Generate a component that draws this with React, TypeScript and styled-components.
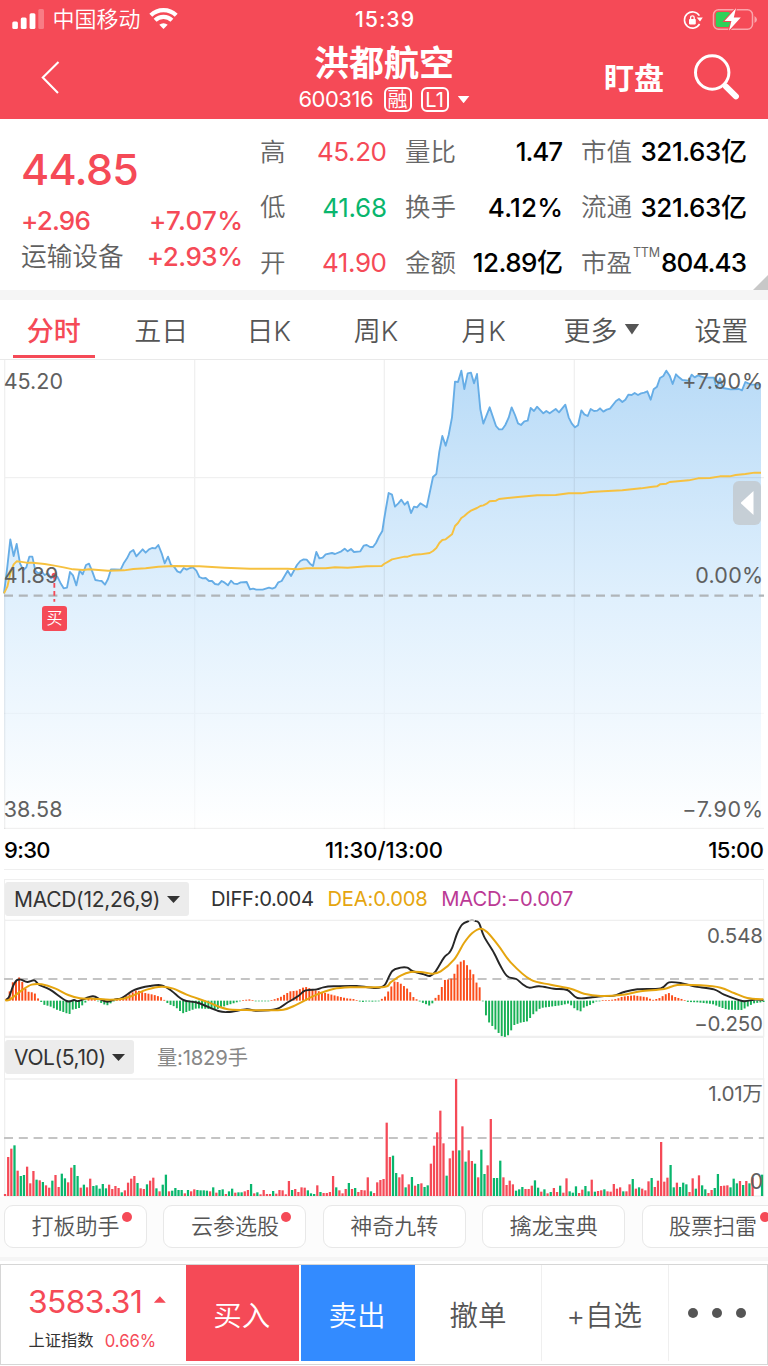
import React from 'react';
import styled, { createGlobalStyle } from 'styled-components';

const RED = '#f54a57';
const GREEN = '#09b66d';
const LINE = '#efefef';

const Global = createGlobalStyle`
  * { box-sizing: border-box; }
  html, body { margin: 0; padding: 0; background: #fff; }
  body {
    width: 768px;
    height: 1366px;
    overflow: hidden;
    font-family: Inter, "Noto Sans CJK SC", sans-serif;
    font-weight: 350;
    color: #555;
    white-space: nowrap;
  }
  svg { display: block; }
`;

const Screen = styled.main`
  width: 768px;
  height: 1366px;
  display: flex;
  flex-direction: column;
  overflow: hidden;
  background: #fff;
`;

const T = styled.span<{ size: number; color?: string; weight?: number; gap?: number }>`
  font-size: ${(p) => p.size}px;
  line-height: 1.2;
  color: ${(p) => p.color ?? 'inherit'};
  font-weight: ${(p) => p.weight ?? 400};
  letter-spacing: ${(p) => p.gap ?? 0}px;
  margin-right: ${(p) => -(p.gap ?? 0)}px;
`;

/* ---------- header ---------- */
const Header = styled.header`
  height: 119px;
  flex: none;
  background: ${RED};
  color: #fff;
`;
const StatusBar = styled.div`
  height: 39px;
  display: grid;
  grid-template-columns: 1fr auto 1fr;
  align-items: center;
  padding: 0 11px 0 12px;
`;
const StatusSide = styled.div<{ end?: boolean }>`
  display: flex;
  align-items: center;
  gap: ${(p) => (p.end ? 9 : 8.5)}px;
  justify-content: ${(p) => (p.end ? 'flex-end' : 'flex-start')};
`;
const TitleBar = styled.div`
  height: 80px;
  display: grid;
  grid-template-columns: 1fr auto 1fr;
  align-items: start;
`;
const BackButton = styled.div`
  padding: 22px 0 0 40.5px;
`;
const TitleBlock = styled.div`
  display: flex;
  flex-direction: column;
  align-items: center;
`;
const StockName = styled.h1`
  margin: 0;
  height: 45px;
  font-size: 35px;
  line-height: 49px;
  font-weight: 700;
`;
const CodeRow = styled.div`
  display: flex;
  align-items: center;
  height: 31px;
`;
const Badge = styled.span<{ left?: number }>`
  width: 28px;
  height: 25px;
  margin-left: ${(p) => p.left ?? 9}px;
  border: 2px solid #fff;
  border-radius: 6px;
  display: flex;
  align-items: center;
  justify-content: center;
  font-size: 20px;
  line-height: 20px;
  font-weight: 400;
`;
const Triangle = styled.i<{ w: number; h: number; up?: boolean; left?: number }>`
  width: ${(p) => p.w}px;
  height: ${(p) => p.h}px;
  margin-left: ${(p) => p.left ?? 0}px;
  margin-bottom: ${(p) => (p.up ? 5 : 0)}px;
  flex: none;
  background: currentColor;
  clip-path: ${(p) => (p.up ? 'polygon(50% 0, 100% 100%, 0 100%)' : 'polygon(0 0, 100% 0, 50% 100%)')};
`;
const HeaderActions = styled.div`
  display: flex;
  justify-content: flex-end;
  align-items: center;
  gap: 30px;
  height: 78px;
  padding-right: 26px;
`;

/* ---------- quote ---------- */
const Quote = styled.section`
  height: 171px;
  flex: none;
  position: relative;
  display: flex;
  padding: 5px 21px 0 21px;
`;
const Summary = styled.div`
  width: 222px;
  padding-top: 17px;
`;
const Price = styled.div`
  height: 62px;
  padding-bottom: 5px;
  display: flex;
  align-items: center;
`;
const SummaryRow = styled.div`
  height: 36px;
  display: flex;
  justify-content: space-between;
  align-items: center;
`;
const Stats = styled.div`
  margin-left: 17px;
  display: grid;
  grid-template-columns: 127px 158px 166px;
  column-gap: 18px;
  grid-auto-rows: 55.6px;
`;
const Stat = styled.div`
  display: flex;
  align-items: center;
  justify-content: space-between;
`;
const Sup = styled.sup`
  font-size: 12.6px;
  line-height: 17px;
  font-weight: 400;
  color: #666;
  letter-spacing: -0.3px;
  align-self: flex-start;
  margin: 9px auto 0 1px;
`;
const Corner = styled.i`
  position: absolute;
  right: 0;
  bottom: 0;
  width: 15px;
  height: 15px;
  background: #c8c8c8;
  clip-path: polygon(100% 0, 100% 100%, 0 100%);
`;
const Divider = styled.div<{ h: number }>`
  height: ${(p) => p.h}px;
  flex: none;
  background: #f5f5f5;
`;

/* ---------- tabs ---------- */
const Tabs = styled.nav`
  height: 60px;
  flex: none;
  display: grid;
  grid-template-columns: 107.6px repeat(4, 107.4px) 128.6px 1fr;
  border-bottom: 1px solid #e9e9e9;
`;
const Tab = styled.div<{ active?: boolean; last?: boolean }>`
  display: flex;
  align-items: center;
  justify-content: center;
  padding-bottom: ${(p) => (p.active ? 0 : 1)}px;
  padding-left: ${(p) => (p.last ? 9 : 0)}px;
  position: relative;
  color: ${(p) => (p.active ? RED : '#555')};
  font-size: 27px;
  font-weight: ${(p) => (p.active ? 500 : 350)};
  &::after {
    content: '';
    display: ${(p) => (p.active ? 'block' : 'none')};
    position: absolute;
    left: 13px;
    right: 12.6px;
    bottom: 1px;
    height: 3.5px;
    background: ${RED};
  }
`;

/* ---------- charts ---------- */
const PriceChart = styled.section`
  height: 469px;
  flex: none;
  position: relative;
`;
const Pinned = styled.span<{ top: number; right?: boolean; size?: number; gap?: number }>`
  position: absolute;
  top: ${(p) => p.top}px;
  ${(p) => (p.right ? `right: ${5 - (p.gap ?? 0)}px;` : 'left: 3.7px;')}
  font-size: ${(p) => p.size ?? 21.5}px;
  line-height: 26px;
  font-weight: 400;
  letter-spacing: ${(p) => p.gap ?? 0}px;
  color: #606060;
`;
const BuyMark = styled.span`
  position: absolute;
  left: 42px;
  top: 246px;
  width: 25px;
  height: 25px;
  border-radius: 3px;
  background: ${RED};
  color: #fff;
  font-size: 16px;
  line-height: 24px;
  text-align: center;
`;
const Drawer = styled.span`
  position: absolute;
  left: 733px;
  top: 121px;
  width: 28px;
  height: 44px;
  border-radius: 6px;
  background: rgba(190, 190, 190, 0.6);
  display: flex;
  align-items: center;
  justify-content: center;
  &::before {
    content: '';
    width: 13px;
    height: 24px;
    background: #fff;
    clip-path: polygon(100% 0, 100% 100%, 0 50%);
  }
`;
const TimeAxis = styled.div`
  height: 41px;
  flex: none;
  margin: 0 4px;
  padding-top: 1.5px;
  display: grid;
  grid-template-columns: 1fr auto 1fr;
  align-items: center;
  border-bottom: 1px solid ${LINE};
  & > :last-child { justify-self: end; }
`;
const Indicator = styled.section<{ h: number }>`
  height: ${(p) => p.h}px;
  flex: none;
  position: relative;
`;
const MacdPanel = styled(Indicator)`
  margin-top: 9px;
`;
const IndicatorHead = styled.div<{ h: number; pad: number }>`
  height: ${(p) => p.h}px;
  margin: 0 4px;
  padding-top: ${(p) => p.pad}px;
  display: flex;
  align-items: flex-start;
  border: 1px solid ${LINE};
  border-bottom: 0;
`;
const Picker = styled.div<{ w: number }>`
  width: ${(p) => p.w}px;
  height: 34px;
  flex: none;
  padding: 1px 9px 0 9px;
  border-radius: 3px;
  background: #ececec;
  color: #333;
  display: flex;
  justify-content: space-between;
  align-items: center;
`;
const Readings = styled.div<{ left: number; drop?: number }>`
  height: 34px;
  padding-top: ${(p) => p.drop ?? 1}px;
  margin-left: ${(p) => p.left}px;
  display: flex;
  align-items: center;
  gap: 13.5px;
`;

/* ---------- chips and trade bar ---------- */
const Chips = styled.div`
  height: 60px;
  flex: none;
  background: #fcfcfc;
  display: flex;
  gap: 16.4px;
  padding: 8.4px 0 0 4px;
`;
const Chip = styled.div<{ dot?: boolean }>`
  width: 143px;
  height: 43px;
  flex: none;
  position: relative;
  background: #fff;
  border: 1px solid #e8e8e8;
  border-radius: 9px;
  font-size: 22px;
  line-height: 41px;
  text-align: center;
  &::after {
    content: '';
    display: ${(p) => (p.dot ? 'block' : 'none')};
    position: absolute;
    left: 117px;
    top: 6px;
    width: 10px;
    height: 10px;
    border-radius: 50%;
    background: ${RED};
  }
`;
const TradeBar = styled.footer`
  height: 101px;
  flex: none;
  margin-top: 3px;
  display: flex;
  border: 1px solid #d6d6d6;
`;
const IndexCell = styled.div`
  width: 184.5px;
  padding-left: 27px;
  color: ${RED};
`;
const IndexRow = styled.div<{ h: number; top: number; gap: number; left?: number }>`
  height: ${(p) => p.h}px;
  margin-top: ${(p) => p.top}px;
  margin-left: ${(p) => p.left ?? 0}px;
  display: flex;
  align-items: center;
  gap: ${(p) => p.gap}px;
`;
const TradeCell = styled.div<{ w: number; bg?: string; rule?: boolean }>`
  width: ${(p) => p.w}px;
  height: 96px;
  flex: none;
  display: flex;
  align-items: center;
  justify-content: center;
  gap: 14.3px;
  padding: 0 1px 0 0;
  background: ${(p) => p.bg ?? '#fff'};
  color: ${(p) => (p.bg ? '#fff' : '#555')};
  margin-right: ${(p) => (p.bg ? 1.5 : 0)}px;
  border-right: ${(p) => (p.rule ? `1px solid ${LINE}` : '0')};
  font-size: 28.5px;
`;
const Dot = styled.i`
  width: 10px;
  height: 10px;
  border-radius: 50%;
  background: #555;
`;

/* ---------- data: three units to a pixel ---------- */
const priceLine =
  '12,700 22,620 31,538 41,588 50,552 60,610 70,630 79,622 88,590 97,590 106,632 115,640 125,635 134,645 144,640 153,655 163,648 172,650 181,668 191,685 201,683 210,636 219,646 229,676 239,632 248,643 258,615 267,611 277,635 286,660 296,662 305,663 315,674 324,657 333,628 343,628 362,629 372,608 381,595 390,577 400,570 409,589 419,578 428,568 437,578 447,568 456,564 466,565 475,555 485,580 494,610 504,590 513,615 522,620 532,634 541,638 551,624 560,629 570,624 579,622 589,632 598,651 608,655 617,654 627,663 636,663 645,672 655,674 665,663 674,668 684,676 693,662 702,671 712,672 722,667 740,666 750,688 759,686 769,689 788,689 807,683 817,686 826,682 835,667 845,663 863,632 873,648 891,615 901,603 911,598 920,599 930,611 939,618 949,576 958,595 968,593 977,583 996,579 1005,582 1024,574 1034,566 1043,574 1053,567 1062,576 1081,574 1091,557 1100,555 1110,561 1119,561 1128,549 1138,528 1147,513 1152,480 1157,450 1166,399 1176,404 1185,440 1195,430 1204,419 1214,434 1223,425 1233,459 1242,440 1251,442 1261,430 1280,442 1299,351 1309,342 1318,275 1327,228 1337,257 1346,225 1356,172 1365,65 1374,66 1384,32 1393,87 1403,40 1413,38 1422,70 1431,42 1441,148 1450,191 1469,142 1488,198 1497,208 1507,208 1516,195 1526,173 1535,142 1545,165 1554,190 1563,195 1573,184 1583,182 1592,144 1602,153 1611,140 1630,160 1639,153 1649,160 1667,147 1677,157 1696,134 1706,172 1715,190 1725,202 1734,196 1744,151 1753,163 1763,168 1772,147 1782,153 1792,152 1800,145 1810,155 1820,149 1830,146 1848,123 1857,117 1867,126 1876,119 1885,104 1895,105 1904,99 1914,105 1923,100 1933,98 1942,94 1952,119 1961,88 1971,80 1980,54 1990,48 1999,32 2009,47 2018,72 2028,43 2037,52 2047,60 2066,62 2075,44 2084,52 2094,46 2112,53 2142,53 2150,84 2160,55 2169,84 2192,88 2217,87 2226,91 2236,66 2245,70 2255,74 2283,74';
const averageLine =
  '12,700 22,680 31,640 41,613 50,604 60,605 79,608 97,608 134,612 163,617 191,622 219,628 250,630 267,628 324,632 372,631 400,627 437,625 475,620 522,618 598,619 674,623 750,626 863,626 893,628 920,625 977,625 1005,622 1043,623 1072,621 1100,619 1145,618 1152,612 1166,604 1176,598 1214,590 1223,590 1242,584 1261,583 1289,579 1299,573 1309,564 1318,549 1327,540 1337,538 1356,523 1365,498 1374,489 1384,474 1393,468 1403,459 1413,452 1431,444 1441,438 1450,436 1460,431 1469,424 1488,422 1497,417 1554,411 1611,406 1667,405 1706,400 1744,400 1772,396 1810,394 1867,391 1923,385 1952,381 1971,379 1980,373 1999,371 2009,366 2066,361 2094,355 2130,354 2160,349 2189,349 2207,345 2236,342 2264,338 2283,338';
const diffRise =
  '18,661 28,650 38,622 50,602 62,600 82,607 103,602 118,616 150,630 200,664 222,661 235,664 278,650 300,659 322,666 345,659 365,655 405,630 450,619 485,617 515,634 550,661 595,670 655,694 685,697 740,689 770,693 830,688 860,670 895,649 915,633 950,629 970,623 1000,620 1070,619 1125,625 1147,621 1157,612 1177,574 1202,564 1222,564 1237,574 1272,584 1290,589 1307,575 1332,534 1347,520 1357,503 1372,460 1387,434 1407,424';
const diffFall =
  '1424,424 1437,430 1452,470 1482,520 1502,560 1522,590 1549,598 1567,613 1587,624 1617,620 1662,627 1702,631 1732,655 1777,653 1812,649 1842,648 1872,637 1912,629 1982,626 2007,608 2047,611 2082,620 2142,629 2172,645 2227,664 2262,660 2290,661';

const toPoints = (s: string) => s.split(' ').map((p) => p.split(',').map(Number) as [number, number]);

const deaPoints: [number, number][] = [
  [15, 662], [30, 659], [65, 632], [95, 615], [125, 614], [165, 626], [205, 646], [240, 656], [280, 657], [330, 660],
  [370, 657], [400, 647], [440, 630], [485, 621], [520, 627], [560, 645], [620, 666], [680, 688], [740, 691],
  [790, 692], [850, 690], [890, 675], [950, 645], [1000, 628], [1050, 623], [1152, 622], [1172, 608], [1202, 588],
  [1232, 577], [1262, 577], [1297, 582], [1322, 575], [1362, 540], [1392, 490], [1417, 460], [1442, 447], [1462, 458],
  [1497, 500], [1532, 548], [1592, 600], [1652, 615], [1712, 627], [1752, 642], [1802, 649], [1862, 646], [1922, 635],
  [1992, 628], [2032, 616], [2102, 617], [2162, 624], [2202, 640], [2242, 655], [2290, 659],
];

const histogram: [number, number][] = [
  [19, 5], [28, 25], [38, 55], [47, 58], [57, 70], [66, 58], [75, 38], [84, 27], [103, 24], [113, 8], [120, 0],
  [131, -12], [150, -17], [170, -27], [190, -34], [208, -41], [217, -27], [236, -23], [255, -7], [265, 5], [285, 6],
  [300, -5], [320, -15], [340, -3], [350, 3], [370, 8], [390, 20], [410, 32], [430, 24], [460, 18], [485, 10],
  [495, 0], [505, -10], [525, -18], [548, -38], [570, -30], [590, -23], [610, -24], [650, -26], [680, -14],
  [710, -5], [730, 2], [750, 4], [765, -1], [790, -2], [808, -1], [820, 3], [840, 10], [870, 28], [890, 30],
  [915, 42], [950, 30], [980, 22], [1010, 14], [1040, 7], [1060, 5], [1075, -2], [1090, -4], [1100, -2],
  [1120, -3], [1140, -1], [1145, 5], [1156, 13], [1166, 30], [1185, 60], [1204, 50], [1223, 35], [1232, 24],
  [1242, 8], [1252, 3], [1260, -3], [1277, -10], [1287, -15], [1297, -8], [1306, 8], [1315, 15], [1325, 40],
  [1334, 62], [1353, 65], [1363, 80], [1372, 108], [1390, 124], [1400, 108], [1409, 95], [1419, 82], [1429, 55],
  [1439, 40], [1446, 0], [1449, -1], [1457, -42], [1467, -65], [1485, -85], [1504, -106], [1514, -109],
  [1524, -104], [1533, -90], [1543, -73], [1562, -66], [1582, -62], [1602, -38], [1622, -22], [1652, -18],
  [1682, -14], [1707, -8], [1722, -22], [1740, -34], [1752, -20], [1772, -12], [1787, -3], [1807, 1], [1832, 2],
  [1852, 6], [1867, 12], [1902, 16], [1942, 10], [1957, 2], [1977, 7], [2005, 24], [2022, 12], [2042, 6],
  [2057, 1], [2064, -4], [2092, -5], [2137, -10], [2162, -20], [2182, -27], [2227, -28], [2242, -18],
  [2262, -8], [2290, -4],
];

const volumes =
  'r6 r117 r142 g152 r76 g60 g63 r88 r38 r75 g49 r47 g42 r32 r25 g46 r63 r27 g67 g53 r41 r85 g93 g60 r25 g34 r26 r52 g30 g32 g22 g36 g23 r34 r21 r30 r24 g11 r17 r40 r52 r60 g39 r23 r21 g35 r46 r55 g23 r14 g34 g64 r14 g16 g24 g18 g18 r8 g18 r14 r20 g18 g17 g17 g16 r14 g26 r10 g18 g20 r6 g14 g22 r10 g11 g11 r14 r18 g36 r8 g11 r5 r18 r6 r6 g15 r7 r18 r17 r5 r45 g18 r21 r12 r26 r25 g17 g8 g6 r32 g12 r9 r9 r12 r60 g26 r17 r8 r21 g39 r21 g24 r12 r18 r17 r56 g14 r9 r41 r48 r51 r220 r117 g121 g69 r56 r65 g26 r35 g57 r31 g36 r38 g27 g32 r97 r151 r191 r256 r158 g61 r113 r136 r351 g137 r209 g103 r137 r105 g97 r56 g139 g66 r92 r231 g54 g54 g106 r56 r33 r46 r35 g16 g20 g27 r21 r21 r31 g47 g25 r13 g20 r8 g12 r24 r12 g31 r10 r53 g14 g10 g29 r9 r19 g30 g14 r49 g13 r15 r17 g20 r14 r13 r36 r22 r26 g14 r14 r35 g51 r22 g26 r22 r17 r44 g54 r27 r46 r162 r43 r55 g93 g26 r40 g27 g40 g35 r12 r53 g22 r62 g32 g20 r9 r18 g24 g66 r30 r31 r32 g26 g52 g38 r45 g33 r45 g38 r56 g0 g0 g64'.split(' ');

function valueAt(points: [number, number][], x: number) {
  for (let i = 1; i < points.length; i++) {
    const [x1, y1] = points[i];
    if (x <= x1) {
      const [x0, y0] = points[i - 1];
      return y0 + ((y1 - y0) * (x - x0)) / (x1 - x0);
    }
  }
  return points[points.length - 1][1];
}

function smoothPath(p: [number, number][]) {
  let d = `M${p[0]}`;
  for (let i = 0; i < p.length - 1; i++) {
    const a = p[Math.max(i - 1, 0)];
    const b = p[i];
    const c = p[i + 1];
    const e = p[Math.min(i + 2, p.length - 1)];
    d += ` C${b[0] + (c[0] - a[0]) / 6},${b[1] + (c[1] - a[1]) / 6} ${c[0] - (e[0] - b[0]) / 6},${c[1] - (e[1] - b[1]) / 6} ${c}`;
  }
  return d;
}

/* ---------- icons ---------- */
const SignalIcon = () => (
  <svg width="32" height="20" viewBox="0 0 32 20" fill="#fff">
    <rect x="0.3" y="12.5" width="5.6" height="7.5" rx="1.5" />
    <rect x="8.8" y="8.5" width="5.8" height="11.5" rx="1.5" />
    <rect x="17.6" y="4.2" width="5.8" height="15.8" rx="1.5" />
    <rect x="26.3" y="0" width="5.7" height="20" rx="1.5" opacity="0.28" />
  </svg>
);
const WifiIcon = () => (
  <svg width="29" height="22" viewBox="0 0 29 22" fill="none" stroke="#fff" strokeWidth="4.2">
    <path d="M1.8 7.3 A18.4 18.4 0 0 1 27.2 7.3" />
    <path d="M6.1 12.3 A12 12 0 0 1 22.9 12.3" />
    <path d="M14.5 21 L10.3 16.8 A6.2 6.2 0 0 1 18.7 16.8 Z" fill="#fff" stroke="none" />
  </svg>
);
const RotationLockIcon = () => (
  <svg width="20" height="20" viewBox="0 0 20 20" fill="none" stroke="#fff" strokeWidth="1.6">
    <path d="M16.4 5.6 A8.1 8.1 0 1 0 16.6 14" />
    <path d="M13.7 7.6 H19.8 L17 11.6 Z" fill="#fff" stroke="none" />
    <rect x="6" y="9" width="6.8" height="5.4" rx="0.8" fill="#fff" stroke="none" />
    <path d="M7.6 9.5 V7.6 a1.8 1.8 0 0 1 3.6 0 V9.5" strokeWidth="1.3" />
  </svg>
);
const BatteryIcon = () => (
  <svg width="45" height="23" viewBox="0 0 45 23">
    <rect x="1.5" y="1.7" width="39" height="19.6" rx="5" fill="none" stroke="#fff" strokeOpacity="0.5" strokeWidth="1.5" />
    <path d="M42.5 8 Q45 9.5 45 11.5 Q45 13.5 42.5 15 Z" fill="#fff" opacity="0.5" />
    <rect x="3.8" y="4" width="14.5" height="15" rx="2.5" fill="#2fd158" />
    <path d="M24 0.3 L12.6 13 H19.4 L17 22.6 L28.8 9.6 H21.8 Z" fill="#fff" stroke={RED} strokeWidth="2" paintOrder="stroke" />
  </svg>
);
const BackIcon = () => (
  <svg width="20" height="34" viewBox="0 0 20 34" fill="none" stroke="#fff" strokeWidth="2.1">
    <path d="M17.5 1 L1.8 16.5 L17 32" />
  </svg>
);
const SearchIcon = () => (
  <svg width="48" height="48" viewBox="0 0 48 48" fill="none" stroke="#fff">
    <circle cx="18.2" cy="18.5" r="16.7" strokeWidth="3" />
    <path d="M29.5 30.5 L32.5 33.5" strokeWidth="4" />
    <path d="M32 32.7 L41.9 42.4" strokeWidth="6" strokeLinecap="round" />
  </svg>
);

const PriceGraph = () => (
  <svg width="768" height="469" viewBox="0 0 2304 1407">
    <defs>
      <linearGradient id="area" gradientUnits="userSpaceOnUse" x1="0" y1="30" x2="0" y2="1407">
        <stop offset="0" stopColor="#b9dbf7" />
        <stop offset="0.5" stopColor="#e0f0fd" />
        <stop offset="1" stopColor="#ffffff" />
      </linearGradient>
    </defs>
    <path d={`M${priceLine.split(' ').join(' L')} L2283,1407 L12,1407 Z`} fill="url(#area)" />
    <g stroke="#000" strokeOpacity="0.06" strokeWidth="4">
      <path d="M14,0 V1407 M584,0 V708 M1153,0 V708 M1723,0 V708 M12,353 H2292" />
      <path d="M584,708 V1407 M1153,708 V1407 M1723,708 V1407 M12,1060 H2292" strokeOpacity="0.025" />
      <path d="M12,1405 H2292" />
    </g>
    <path d="M12,707 H2292" stroke="#b0b5b9" strokeWidth="6.5" strokeDasharray="27 17.4" />
    <polyline points={priceLine} fill="none" stroke="#66ade6" strokeWidth="5.6" strokeLinejoin="round" />
    <polyline points={averageLine} fill="none" stroke="#f6c140" strokeWidth="5.8" strokeLinejoin="round" />
    <path d="M163,645 V725" stroke={RED} strokeWidth="5.5" strokeDasharray="14 10" />
    <circle cx="163" cy="646" r="8" fill={RED} />
  </svg>
);

const BAR_STEP = 9.463;

const MacdGraph = () => (
  <svg width="768" height="118" viewBox="0 418 2304 354">
    <path d="M12,422 H2292 M12,770 H2292 M14,418 V772 M2291,418 V772" stroke={LINE} strokeWidth="4" />
    <path d="M12,598 H2292" stroke="#c4c4c4" strokeWidth="6.5" strokeDasharray="27 17.4" />
    {Array.from({ length: 241 }, (_, i) => {
      const x = 19.5 + i * BAR_STEP;
      const v = valueAt(histogram, x);
      const h = Math.max(Math.abs(v), 2);
      return (
        <rect key={i} x={x - 2.9} y={v > 0 ? 663 - h : 663} width="5.8" height={h} fill={v > 0 ? '#fb4d1a' : '#17b055'} />
      );
    })}
    <path d={smoothPath(toPoints(diffRise))} fill="none" stroke="#262626" strokeWidth="5.8" />
    <path d={smoothPath(toPoints(diffFall))} fill="none" stroke="#262626" strokeWidth="5.8" />
    <path d="M1407,424 L1416,420 L1424,424" fill="none" stroke="#bbb" strokeWidth="5" />
    <path d={smoothPath(deaPoints)} fill="none" stroke="#e5a50f" strokeWidth="6" />
  </svg>
);

const VolumeGraph = () => (
  <svg width="768" height="119" viewBox="0 114 2304 357">
    <path d="M12,117 H2292 M12,468 H2292 M14,114 V468 M2291,114 V468" stroke={LINE} strokeWidth="4" />
    <path d="M12,294 H2292" stroke="#c4c4c4" strokeWidth="6.5" strokeDasharray="27 17.4" />
    {volumes.map((v, i) => {
      const h = Number(v.slice(1));
      return (
        <rect key={i} x={15 + i * BAR_STEP - 3.3} y={468 - h} width="6.8" height={h} fill={v[0] === 'r' ? RED : GREEN} />
      );
    })}
  </svg>
);

const chips = [
  { name: '打板助手', dot: true },
  { name: '云参选股', dot: true },
  { name: '神奇九转' },
  { name: '擒龙宝典' },
  { name: '股票扫雷', dot: true },
];

const stats = [
  { label: '高', value: '45.20', color: RED, gap: -0.4 },
  { label: '量比', value: '1.47', gap: -1.1 },
  { label: '市值', value: '321.63亿', gap: -0.4 },
  { label: '低', value: '41.68', color: GREEN, gap: -0.3 },
  { label: '换手', value: '4.12%', gap: 0.2 },
  { label: '流通', value: '321.63亿', gap: -0.4 },
  { label: '开', value: '41.90', color: RED, gap: -0.4 },
  { label: '金额', value: '12.89亿', gap: -0.5 },
  { label: '市盈', value: '804.43', sup: 'TTM', gap: -0.9 },
];

export default function App() {
  return (
    <Screen>
      <Global />
      <Header>
        <StatusBar>
          <StatusSide>
            <SignalIcon />
            <T size={22} weight={350}>中国移动</T>
            <WifiIcon />
          </StatusSide>
          <T size={21.3} weight={500} gap={1}>15:39</T>
          <StatusSide end>
            <RotationLockIcon />
            <BatteryIcon />
          </StatusSide>
        </StatusBar>
        <TitleBar>
          <BackButton><BackIcon /></BackButton>
          <TitleBlock>
            <StockName>洪都航空</StockName>
            <CodeRow>
              <T size={22} gap={-0.5}>600316</T>
              <Badge left={10}>融</Badge>
              <Badge>L1</Badge>
              <Triangle w={12} h={7.5} left={9} />
            </CodeRow>
          </TitleBlock>
          <HeaderActions>
            <T size={30} weight={700}>盯盘</T>
            <SearchIcon />
          </HeaderActions>
        </TitleBar>
      </Header>

      <Quote>
        <Summary>
          <Price><T size={43} color={RED} weight={500} gap={-0.7}>44.85</T></Price>
          <SummaryRow>
            <T size={26} color={RED} weight={500} gap={-0.8}>+2.96</T>
            <T size={26} color={RED} weight={500} gap={0.3}>+7.07%</T>
          </SummaryRow>
          <SummaryRow>
            <T size={25.7} weight={350} color="#606060">运输设备</T>
            <T size={26} color={RED} weight={500} gap={-0.5}>+2.93%</T>
          </SummaryRow>
        </Summary>
        <Stats>
          {stats.map((s) => (
            <Stat key={s.label}>
              <T size={25.5} weight={350} color="#666">{s.label}</T>
              {s.sup && <Sup>{s.sup}</Sup>}
              <T size={26} weight={s.color ? 400 : 500} color={s.color ?? '#000'} gap={s.gap}>{s.value}</T>
            </Stat>
          ))}
        </Stats>
        <Corner />
      </Quote>
      <Divider h={10} />

      <Tabs>
        <Tab active>分时</Tab>
        <Tab>五日</Tab>
        <Tab>日K</Tab>
        <Tab>周K</Tab>
        <Tab>月K</Tab>
        <Tab>更多<Triangle w={15} h={11} left={7} /></Tab>
        <Tab last>设置</Tab>
      </Tabs>

      <PriceChart>
        <PriceGraph />
        <Pinned top={8}>45.20</Pinned>
        <Pinned top={202}>41.89</Pinned>
        <Pinned top={436} gap={0.1}>38.58</Pinned>
        <Pinned top={8} right gap={0.7}>+7.90%</Pinned>
        <Pinned top={202} right gap={0.2}>0.00%</Pinned>
        <Pinned top={436} right gap={0.7}>−7.90%</Pinned>
        <BuyMark>买</BuyMark>
        <Drawer />
      </PriceChart>

      <TimeAxis>
        <T size={22} weight={500} color="#000" gap={-0.7}>9:30</T>
        <T size={22} weight={500} color="#000" gap={-0.1}>11:30/13:00</T>
        <T size={22} weight={500} color="#000" gap={-0.5}>15:00</T>
      </TimeAxis>

      <MacdPanel h={158}>
        <IndicatorHead h={40} pad={2}>
          <Picker w={184}>
            <T size={21} gap={-0.3}>MACD(12,26,9)</T>
            <Triangle w={13} h={7} />
          </Picker>
          <Readings left={22}>
            <T size={20.2} color="#333" gap={-0.3}>DIFF:0.004</T>
            <T size={20.2} color="#e5a50f" gap={-0.2}>DEA:0.008</T>
            <T size={20.2} color="#bb3a95" gap={-0.2}>MACD:−0.007</T>
          </Readings>
        </IndicatorHead>
        <MacdGraph />
        <Pinned top={44} right size={20.5} gap={-0.1}>0.548</Pinned>
        <Pinned top={132} right size={20.5} gap={-0.2}>−0.250</Pinned>
      </MacdPanel>

      <Indicator h={160}>
        <IndicatorHead h={41} pad={2}>
          <Picker w={129}>
            <T size={21} gap={-0.4}>VOL(5,10)</T>
            <Triangle w={13} h={7} />
          </Picker>
          <Readings left={23} drop={2}>
            <T size={20.3} color="#888" gap={-0.2}>量:1829手</T>
          </Readings>
        </IndicatorHead>
        <VolumeGraph />
        <Pinned top={44} right size={20.7} gap={-0.3}>1.01万</Pinned>
        <Pinned top={132} right size={21}>0</Pinned>
      </Indicator>

      <Chips>
        {chips.map((c) => (
          <Chip key={c.name} dot={c.dot}>{c.name}</Chip>
        ))}
      </Chips>
      <Divider h={4} />

      <TradeBar>
        <IndexCell>
          <IndexRow h={40} top={17} gap={11}>
            <T size={31.8} weight={400} gap={-0.6}>3583.31</T>
            <Triangle w={12} h={6.5} up />
          </IndexRow>
          <IndexRow h={30} top={4} gap={11} left={0.5}>
            <T size={16.3} color="#333">上证指数</T>
            <T size={16.7}>0.66%</T>
          </IndexRow>
        </IndexCell>
        <TradeCell w={113.5} bg={RED}>买入</TradeCell>
        <TradeCell w={114} bg="#338bff">卖出</TradeCell>
        <TradeCell w={126} rule>撤单</TradeCell>
        <TradeCell w={126.5} rule>+自选</TradeCell>
        <TradeCell w={98}><Dot /><Dot /><Dot /></TradeCell>
      </TradeBar>
    </Screen>
  );
}
